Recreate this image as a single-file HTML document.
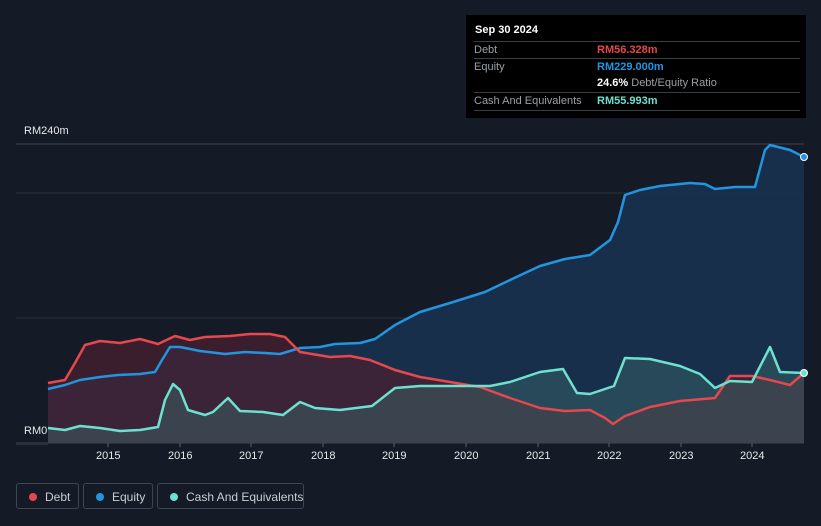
<!DOCTYPE html><html><head><style>
body{margin:0;width:821px;height:526px;background:#151b26;font-family:"Liberation Sans",sans-serif;overflow:hidden;position:relative}
.tt{position:absolute;left:466px;top:15px;width:340px;height:103px;background:#000;color:#fff;font-size:11px}
.tt .r{position:absolute;left:8px;width:326px;border-top:1px solid #3a3f47;height:17px;line-height:17px;color:#9aa0a6}
.tt .v{position:absolute;left:123px;font-weight:bold;white-space:nowrap}
.leg{position:absolute;top:483px;height:26px;border:1px solid #3f4652;border-radius:3px;color:#c9cdd3;font-size:12px;line-height:26px;box-sizing:border-box;white-space:nowrap}
.leg i{position:absolute;left:12px;top:9px;width:8px;height:8px;border-radius:50%}
.leg span{position:absolute;left:28px;white-space:nowrap}
.ax{position:absolute;color:#e6e8eb;font-size:11px}
</style></head><body>
<svg width="821" height="526" style="position:absolute;left:0;top:0">
<line x1="16" y1="144" x2="804" y2="144" stroke="#3b424d"/>
<line x1="16" y1="193" x2="804" y2="193" stroke="#2a313b"/>
<line x1="16" y1="318" x2="804" y2="318" stroke="#2a313b"/>
<line x1="16" y1="443" x2="804" y2="443" stroke="#3b424d"/>
<path d="M48,389 L65,385 L80,380 L100,377 L118,375 L140,374 L155,372 L162,360 L170,347 L180,347 L200,351 L225,354 L245,352 L265,353 L280,354 L300,348 L320,347 L335,344 L360,343 L375,339 L395,325 L420,312 L450,303 L485,292 L510,280 L540,266 L565,259 L590,255 L610,240 L618,222 L625,195 L640,190 L660,186 L690,183 L705,184 L715,189 L735,187 L755,187 L765,150 L770,145 L790,150 L804,157 L804,443 L48,443Z" fill="#183250" fill-opacity="0.9"/>
<path d="M48,383 L65,380 L75,363 L85,345 L100,341 L120,343 L140,339 L158,344 L175,336 L190,340 L205,337 L230,336 L250,334 L270,334 L285,337 L300,352 L330,357 L350,356 L370,360 L395,370 L420,377 L450,382 L480,387 L510,398 L540,408 L565,411 L590,410 L605,418 L613,424 L625,416 L650,407 L680,401 L715,398 L730,376 L752,376 L770,380 L790,385 L804,373 L804,443 L48,443Z" fill="#4a2030" fill-opacity="0.7"/>
<path d="M48,428 L65,430 L80,426 L100,428 L120,431 L140,430 L158,427 L165,400 L173,384 L180,390 L188,410 L205,415 L213,412 L228,398 L240,411 L263,412 L283,415 L300,402 L315,408 L340,410 L372,406 L395,388 L420,386 L490,386 L510,382 L540,372 L563,369 L577,393 L590,394 L614,386 L625,358 L650,359 L680,366 L700,374 L715,388 L730,381 L752,382 L770,347 L780,372 L804,373 L804,443 L48,443Z" fill="#3c6b6b" fill-opacity="0.45"/>
<path d="M48,389 L65,385 L80,380 L100,377 L118,375 L140,374 L155,372 L162,360 L170,347 L180,347 L200,351 L225,354 L245,352 L265,353 L280,354 L300,348 L320,347 L335,344 L360,343 L375,339 L395,325 L420,312 L450,303 L485,292 L510,280 L540,266 L565,259 L590,255 L610,240 L618,222 L625,195 L640,190 L660,186 L690,183 L705,184 L715,189 L735,187 L755,187 L765,150 L770,145 L790,150 L804,157" fill="none" stroke="#2394e0" stroke-width="2.5" stroke-linejoin="round"/>
<path d="M48,383 L65,380 L75,363 L85,345 L100,341 L120,343 L140,339 L158,344 L175,336 L190,340 L205,337 L230,336 L250,334 L270,334 L285,337 L300,352 L330,357 L350,356 L370,360 L395,370 L420,377 L450,382 L480,387 L510,398 L540,408 L565,411 L590,410 L605,418 L613,424 L625,416 L650,407 L680,401 L715,398 L730,376 L752,376 L770,380 L790,385 L804,373" fill="none" stroke="#e5484d" stroke-width="2.5" stroke-linejoin="round"/>
<path d="M48,428 L65,430 L80,426 L100,428 L120,431 L140,430 L158,427 L165,400 L173,384 L180,390 L188,410 L205,415 L213,412 L228,398 L240,411 L263,412 L283,415 L300,402 L315,408 L340,410 L372,406 L395,388 L420,386 L490,386 L510,382 L540,372 L563,369 L577,393 L590,394 L614,386 L625,358 L650,359 L680,366 L700,374 L715,388 L730,381 L752,382 L770,347 L780,372 L804,373" fill="none" stroke="#6ee0cf" stroke-width="2.5" stroke-linejoin="round"/>
<circle cx="804" cy="157" r="3.5" fill="#2394e0" stroke="#fff"/>
<circle cx="804" cy="373" r="3.5" fill="#6ee0cf" stroke="#fff"/>
<rect x="16" y="443" width="32" height="2" fill="#2a313b"/>
<g stroke="#5a616b"><line x1="108" y1="443" x2="108" y2="447"/><line x1="180" y1="443" x2="180" y2="447"/><line x1="251" y1="443" x2="251" y2="447"/><line x1="323" y1="443" x2="323" y2="447"/><line x1="394" y1="443" x2="394" y2="447"/><line x1="466" y1="443" x2="466" y2="447"/><line x1="538" y1="443" x2="538" y2="447"/><line x1="609" y1="443" x2="609" y2="447"/><line x1="681" y1="443" x2="681" y2="447"/><line x1="752" y1="443" x2="752" y2="447"/></g>
</svg>
<div class="ax" style="left:24px;top:125px">RM240m</div>
<div class="ax" style="left:24px;top:425px">RM0</div>
<div class="ax" style="left:96px;top:450px">2015</div><div class="ax" style="left:168px;top:450px">2016</div><div class="ax" style="left:239px;top:450px">2017</div><div class="ax" style="left:311px;top:450px">2018</div><div class="ax" style="left:382px;top:450px">2019</div><div class="ax" style="left:454px;top:450px">2020</div><div class="ax" style="left:526px;top:450px">2021</div><div class="ax" style="left:597px;top:450px">2022</div><div class="ax" style="left:669px;top:450px">2023</div><div class="ax" style="left:740px;top:450px">2024</div>
<div class="tt">
<div style="position:absolute;left:9px;top:9px;font-weight:bold">Sep 30 2024</div>
<div class="r" style="top:26px">Debt<span class="v" style="color:#e5484d">RM56.328m</span></div>
<div class="r" style="top:43px">Equity<span class="v" style="color:#2394e0">RM229.000m</span></div>
<div class="r" style="top:60px;border-top:none"><span class="v" style="color:#fff">24.6% <span style="color:#9aa0a6;font-weight:normal">Debt/Equity Ratio</span></span></div>
<div class="r" style="top:77px">Cash And Equivalents<span class="v" style="color:#6ee0cf">RM55.993m</span></div>
<div style="position:absolute;left:8px;top:95px;width:326px;border-top:1px solid #3a3f47"></div>
</div>
<div class="leg" style="left:16px;width:63px"><i style="background:#e5484d"></i><span>Debt</span></div>
<div class="leg" style="left:83px;width:70px"><i style="background:#2394e0"></i><span>Equity</span></div>
<div class="leg" style="left:157px;width:147px"><i style="background:#6ee0cf"></i><span>Cash And Equivalents</span></div>
</body></html>
